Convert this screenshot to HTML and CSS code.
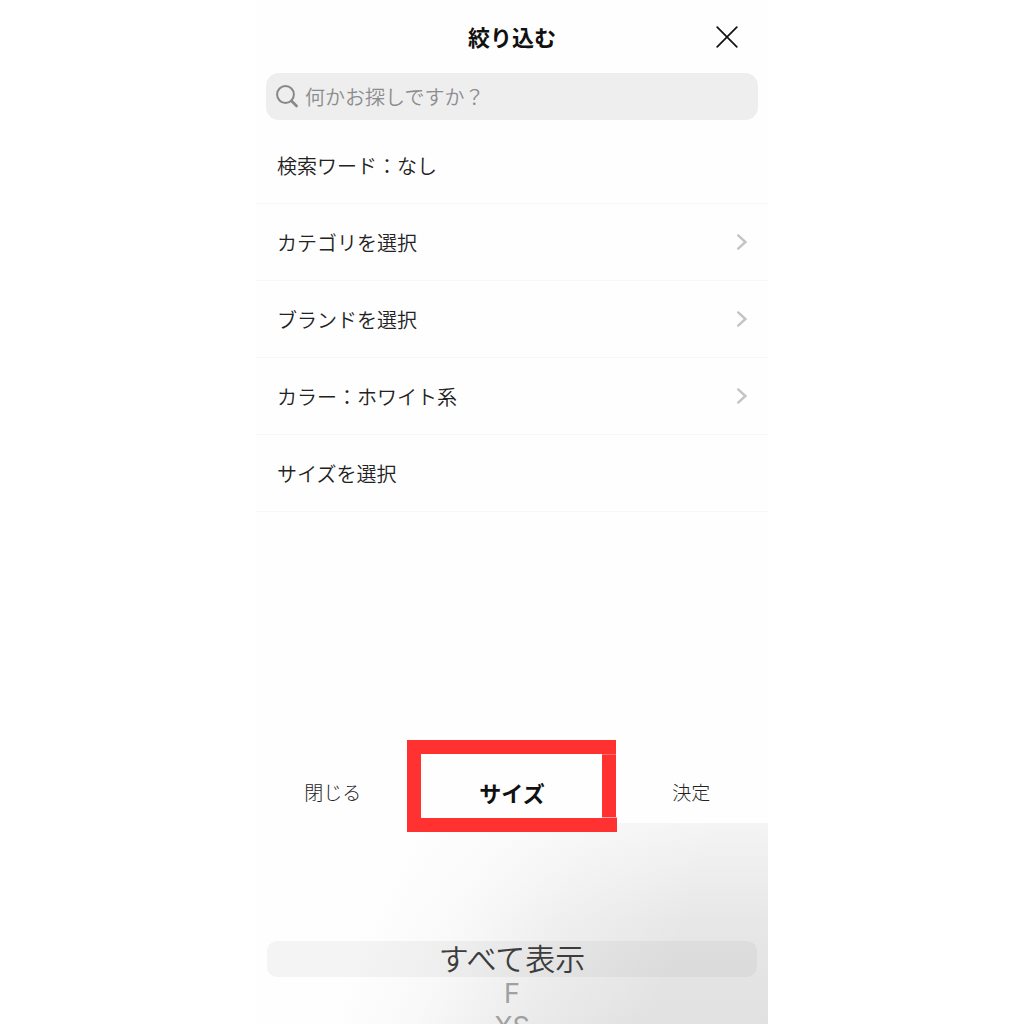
FILE: index.html
```html
<!DOCTYPE html>
<html lang="ja">
<head>
    <meta charset="UTF-8" />
    <meta name="viewport" content="width=device-width, initial-scale=1" />
    <title>絞り込む</title>
    <link rel="stylesheet" href="styles.css">
</head>
<body>
    <main class="screen">
        <header class="header">
            <h1 class="title">絞り込む</h1>
            <button class="close" type="button" aria-label="閉じる">
                <svg viewBox="0 0 22 22" width="22" height="22"><path d="M1.2 1.2 20.8 20.8M20.8 1.2 1.2 20.8" /></svg>
            </button>
        </header>

        <form class="search">
            <label class="search-label" for="keyword" aria-label="検索">
                <svg viewBox="0 0 24 24" width="24" height="24">
                    <circle cx="10.5" cy="9.5" r="8.4" />
                    <path class="handle" d="M16.6 16 21.6 21" />
                </svg>
            </label>
            <input class="search-input" id="keyword" type="text" placeholder="何かお探しですか？" />
        </form>

        <div class="list">
            <div class="row">検索ワード：なし</div>
            <button class="row" type="button">
                カテゴリを選択
                <svg class="chevron" viewBox="0 0 10 16" width="10" height="16"><path d="M1.2 1.4 8.4 8 1.2 14.6" /></svg>
            </button>
            <button class="row" type="button">
                ブランドを選択
                <svg class="chevron" viewBox="0 0 10 16" width="10" height="16"><path d="M1.2 1.4 8.4 8 1.2 14.6" /></svg>
            </button>
            <button class="row" type="button">
                カラー：ホワイト系
                <svg class="chevron" viewBox="0 0 10 16" width="10" height="16"><path d="M1.2 1.4 8.4 8 1.2 14.6" /></svg>
            </button>
            <button class="row" type="button">サイズを選択</button>
        </div>

        <section class="sheet">
            <div class="toolbar">
                <button class="action" type="button">閉じる</button>
                <h2 class="sheet-title">
                    サイズ
                    <svg class="frame" viewBox="0 0 210 92" width="210" height="92">
                        <rect x="195" y="14" width="14" height="64" />
                        <rect x="0" y="0" width="14" height="92" />
                        <rect x="0" y="0" width="209" height="14" />
                        <rect x="0" y="78" width="210" height="14" />
                        <path class="seam" d="M195 14.5H209" />
                        <path d="M195 77.5H210" />
                    </svg>
                </h2>
                <button class="action" type="button">決定</button>
            </div>
            <div class="picker" role="radiogroup" aria-label="サイズ">
                <label class="option selected"><input type="radio" name="size" checked />すべて表示</label>
                <label class="option"><input type="radio" name="size" />F</label>
                <label class="option"><input type="radio" name="size" />XS</label>
            </div>
        </section>
    </main>
</body>
</html>
```

FILE: styles.css
```css
* {
    box-sizing: border-box;
}

body {
    margin: 0;
    background: #fff;
    color: #222;
    font-family: "Noto Sans CJK JP", sans-serif;
    font-size: 20px;
    font-weight: 350;
}

button {
    padding: 0;
    border: none;
    background: none;
    color: inherit;
    font: inherit;
    cursor: pointer;
}

svg {
    display: block;
    fill: none;
    stroke-linecap: round;
}

.screen {
    display: flex;
    flex-direction: column;
    width: 50%;
    min-width: 360px;
    height: 100vh;
    margin: 0 auto;
    overflow: hidden;
    background: #fefefe;
}

.header {
    display: grid;
    grid-template-columns: 1fr auto 1fr;
    align-items: center;
    padding: 20px 30px;
}

.title {
    grid-column: 2;
    margin: 0;
    color: #111;
    font-size: 22px;
    font-weight: 700;
    line-height: 33px;
}

.close {
    justify-self: end;
}

.close svg {
    stroke: #111;
    stroke-width: 1.7;
}

.search {
    display: flex;
    align-items: center;
    gap: 6px;
    margin: 0 10px 7px;
    padding: 0 9px;
    border-radius: 13px;
    background: #eee;
}

.search-label svg {
    stroke: #87878b;
    stroke-width: 2;
}

.search-label .handle {
    stroke-width: 2.6;
}

.search-input {
    flex: 1;
    min-width: 0;
    height: 47px;
    padding: 0;
    border: none;
    outline: none;
    background: none;
    color: #222;
    font: inherit;
}

.search-input::placeholder {
    color: #8c8c8f;
    opacity: 1;
}

.row {
    display: flex;
    align-items: center;
    justify-content: space-between;
    width: 100%;
    height: 77px;
    padding: 0 21px;
    border-bottom: 1px solid #f7f7f7;
    text-align: left;
}

.chevron {
    stroke: #c4c4c4;
    stroke-width: 2.4;
}

.sheet {
    margin-top: auto;
}

.toolbar {
    display: grid;
    grid-template-columns: 3fr 4fr 3fr;
    height: 83px;
    line-height: 104px;
}

.action {
    color: #222;
    font-size: 19px;
    font-weight: 300;
}

.sheet-title {
    position: relative;
    margin: 0;
    color: #111;
    font-size: 22px;
    font-weight: 700;
    text-align: center;
}

/* highlight box drawn over the sheet title */
.frame {
    position: absolute;
    top: 0;
    left: 50%;
    transform: translateX(-50%);
}

.frame rect {
    fill: #ff3131;
}

.frame path {
    stroke: #ffa0a0;
    stroke-linecap: butt;
}

.frame .seam {
    stroke: #ff6a6a;
}

.picker {
    display: flex;
    flex-direction: column;
    gap: 1px;
    height: 201px;
    padding: 118px 11px 0;
    overflow: hidden;
    background:
        linear-gradient(110deg, #fefefe 25%, rgba(254, 254, 254, 0.8) 40%, rgba(254, 254, 254, 0.35) 58%, rgba(254, 254, 254, 0) 80%),
        linear-gradient(#f4f4f4, #e7e7e7 50%, #e1e1e1);
}

.option {
    flex: none;
    color: #a0a0a0;
    font-family: Inter, "Noto Sans CJK JP", sans-serif;
    font-size: 27px;
    font-weight: 400;
    line-height: 32px;
    text-align: center;
}

.option input {
    position: absolute;
    opacity: 0;
    pointer-events: none;
}

.selected {
    border-radius: 10px;
    background: rgba(80, 80, 90, 0.06);
    color: #3c3c3c;
    font-size: 30px;
    font-weight: 350;
    line-height: 36px;
}
```
